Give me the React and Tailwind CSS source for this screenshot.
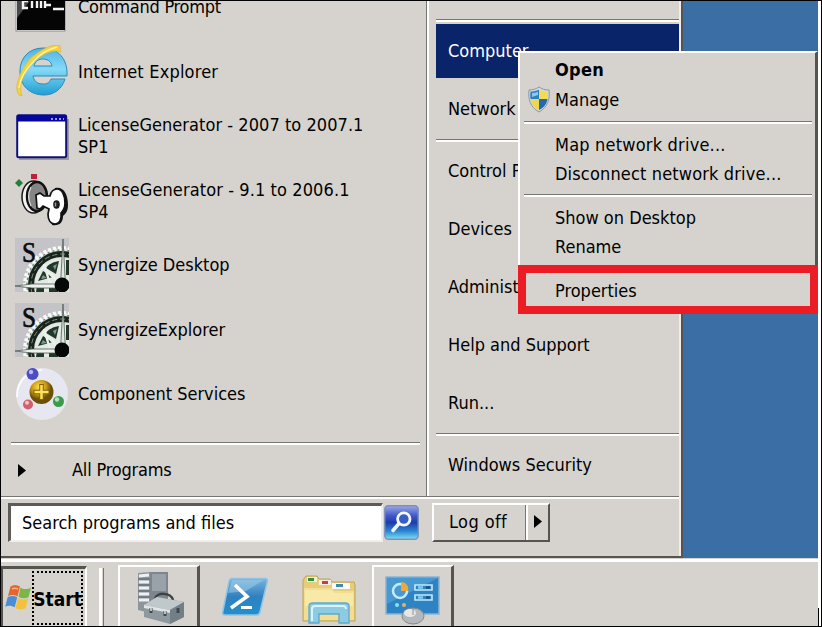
/**
 * Windows Server desktop: Start menu open, context menu shown on "Computer".
 */

/* ---------- Program icons ---------- */

function CommandPromptIcon() {
  return (
    <svg width="54" height="54" viewBox="0 0 54 54">
      <rect x="1" y="5" width="49" height="46" fill="#fff" stroke="#8d8d8d" />
      <rect x="2" y="8" width="48" height="42" fill="#050505" />
      <path d="M2 9h22L2 38z" fill="#4a4a4a" />
      <path d="M13 21H8v7h5M17 28v-8M22 20v8M26 21v7M30 20v8M30 25h6M38 29h11" stroke="#f4f4f4" strokeWidth="2.4" fill="none" />
    </svg>
  );
}

function InternetExplorerIcon() {
  return (
    <svg width="54" height="54" viewBox="0 0 54 54">
      <defs>
        <linearGradient id="ie" x1="0" y1="0" x2="0" y2="1">
          <stop offset="0" stopColor="#4fb4e2" />
          <stop offset=".45" stopColor="#84daf6" />
          <stop offset="1" stopColor="#1f9ed4" />
        </linearGradient>
      </defs>
      <path
        d="M28 3C14 3 5 13 5 26c0 15 10 24 24 24 10 0 18-6 21-16H36c-2 4-4 5-8 5-6 0-9-3-10-8h34C53 14 43 3 28 3zM19 21c1-5 5-7 9-7s8 2 9 7z"
        fill="url(#ie)"
        stroke="#2b8ab8"
        strokeWidth="1"
      />
      <path d="M4 50C-1 44 3 29 14 15 25 4 39-2 45 1l1 6C38 4 28 9 20 16 9 27 3 39 7 51z" fill="#f3d23e" stroke="#e0b53c" strokeWidth=".7" />
      <path d="M4 43c1-9 7-19 15-27C26 8 34 4 42 2" stroke="#fff3a0" strokeWidth="1.5" fill="none" />
    </svg>
  );
}

function WindowIcon() {
  return (
    <svg width="54" height="54" viewBox="0 0 54 54">
      <path d="M4 50h49V10" stroke="#9c9c9c" strokeWidth="2" fill="none" />
      <rect x="2.2" y="6.2" width="49" height="42" rx="1.5" fill="#fff" stroke="#10107c" strokeWidth="2" />
      <rect x="2" y="6" width="49" height="6.5" fill="#0505a0" />
      <path d="M36 10h2m2 0h2m2 0h2m2 0h1" stroke="#c8c8ff" strokeWidth="1.5" />
    </svg>
  );
}

function KeyIcon() {
  return (
    <svg width="54" height="54" viewBox="0 0 54 54">
      <path d="M4 5l4 4-4 4-4-4z" fill="#23803a" />
      <rect x="16" y="0" width="6" height="5" fill="#c0203a" />
      <ellipse cx="18.500" cy="23" rx="11.500" ry="16" fill="#f2f2f2" stroke="#161616" strokeWidth="1.500" />
      <ellipse cx="22" cy="22.500" rx="10" ry="14.500" fill="#858585" stroke="#111" strokeWidth="2.400" />
      <path d="M16 13c-3 6-3 13 0 19" stroke="#ddd" strokeWidth="1.2" fill="none" />
      {/* dark edge on the right of the key */}
      <path d="M40 14c9-2 13 7 13 17 0 7-3 9-5 11 0 7-4 10-11 9z" fill="#111" />
      <path
        d="M21 21l4-2 4 3h6c1-4 3-7 7-7 5 0 8 6 8 14 0 5-2 8-4 10 1 7-2 11-6 11-5 0-7-5-7-10l1-5-6-3-3 3-3-1z"
        fill="#fff"
        stroke="#111"
        strokeWidth="1.7"
      />
      <ellipse cx="41.500" cy="30.500" rx="3.300" ry="4.200" fill="#1a1a1a" />
      <path d="M40.500 28.500v4" stroke="#999" strokeWidth="1.500" />
    </svg>
  );
}

function SynergizeIcon() {
  return (
    <svg width="54" height="54" viewBox="0 0 54 54">
      <rect width="54" height="54" fill="#c4c4c8" />
      {/* quarter wheel centred on the hub */}
      <circle cx="47" cy="47" r="37" fill="#dfe4df" />
      <circle cx="47" cy="47" r="37" fill="none" stroke="#fafafa" strokeWidth="4" strokeDasharray="3 2" />
      <circle cx="47" cy="47" r="35" fill="none" stroke="#77847b" strokeWidth="1.500" strokeDasharray="2 3" />
      <circle cx="47" cy="47" r="31" fill="none" stroke="#18241c" strokeWidth="6" />
      <circle cx="47" cy="47" r="31" fill="none" stroke="#7c9383" strokeWidth="1" strokeDasharray="5 3" />
      <circle cx="47" cy="47" r="27" fill="#e3eae4" />
      <path d="M44 23c-6 1-10 3-13 7l10 6zM28 33l-5 10 15-4zM22 48l-1 6h8v-4zM34 50h9v4h-9zM51 22h3v15h-3z" fill="#22362a" />
      <path d="M28 29l17 17M29 26l6 20" stroke="#e9f1ea" strokeWidth="2.500" />
      <path d="M38 28l2 4 2-6zM28 37l-2 4 6-1z" fill="#7d9b86" />
      <path d="M48 1l2.500 46h-5z" fill="#dfe5e0" stroke="#4e5b52" strokeWidth=".8" />
      <path d="M0 48l17-2h31v4H17z" fill="#eef2ee" stroke="#4e5b52" strokeWidth=".8" />
      <circle cx="47" cy="47" r="7.500" fill="#050807" />
      <text x="7" y="24" fontSize="29" fontFamily="Liberation Serif, serif" textLength="14" lengthAdjust="spacingAndGlyphs" fill="#0b0b0b" stroke="#0b0b0b" strokeWidth=".7">
        S
      </text>
    </svg>
  );
}

function ComponentServicesIcon() {
  return (
    <svg width="54" height="54" viewBox="0 0 54 54">
      <defs>
        <radialGradient id="gold" cx=".4" cy=".3">
          <stop offset="0" stopColor="#ffe14a" />
          <stop offset=".6" stopColor="#c99a12" />
          <stop offset="1" stopColor="#6b5008" />
        </radialGradient>
      </defs>
      <circle cx="27" cy="27" r="26" fill="#e6e7f0" />
      <path d="M2 30C2 14 12 4 27 3" stroke="#fff" strokeWidth="1.500" fill="none" />
      <circle cx="17.500" cy="7" r="6" fill="#4a4ec2" />
      <circle cx="16" cy="5" r="2.200" fill="#b5b8f5" />
      <circle cx="26.500" cy="25" r="12" fill="url(#gold)" />
      <path d="M26.500 17v16M18.500 25h16" stroke="#80600c" strokeWidth="4.500" />
      <path d="M26.500 18v14M19.500 25h14" stroke="#ffe25a" strokeWidth="2.500" />
      <circle cx="13" cy="37.500" r="5" fill="#d0606c" />
      <circle cx="12" cy="35.800" r="2" fill="#f6c0c6" />
      <circle cx="43.500" cy="34.500" r="5.500" fill="#3d9a4c" />
      <circle cx="42" cy="32.500" r="2.200" fill="#b0e6b8" />
    </svg>
  );
}

/* ---------- Small icons ---------- */

function ShieldIcon() {
  return (
    <svg width="24" height="27" viewBox="0 0 24 27">
      <path d="M12 1c3 2 6 3 10 3 1 9-1 17-10 22C3 21 1 13 2 4c4 0 7-1 10-3z" fill="#d3dade" stroke="#8798a4" strokeWidth="1" />
      <path d="M12 3.500V13H3.500c-.4-3-.2-5 0-7.500 3 0 6-.500 8.500-2z" fill="#2d7fc4" />
      <path d="M12 3.500V13h8.500c.4-3 .2-5 0-7.500-3 0-6-.500-8.500-2z" fill="#f3dc50" />
      <path d="M12 24V13H3.500c.8 5 3.500 8.500 8.500 11z" fill="#f0d648" />
      <path d="M12 24V13h8.500c-.8 5-3.500 8.500-8.500 11z" fill="#2468b4" />
      <path d="M5 7c2 0 4-.5 6-1.300V9L5 11z" fill="#8cc8ee" />
    </svg>
  );
}

function SearchIcon() {
  return (
    <svg width="35" height="35" viewBox="0 0 35 35">
      <defs>
        <linearGradient id="find" x1="0" y1="0" x2="0" y2="1">
          <stop offset="0" stopColor="#9aa9ea" />
          <stop offset=".3" stopColor="#4257c8" />
          <stop offset=".5" stopColor="#1c3cae" />
          <stop offset=".75" stopColor="#2b83d0" />
          <stop offset="1" stopColor="#7be0f2" />
        </linearGradient>
      </defs>
      <rect x=".8" y=".8" width="33.400" height="33.400" rx="3.500" fill="url(#find)" stroke="#7d90b8" strokeWidth="1.400" />
      <path d="M15 18.500l-6 7" stroke="#eaf5ff" strokeWidth="3.600" strokeLinecap="round" />
      <circle cx="19.800" cy="14" r="6.200" fill="#3a5cc6" stroke="#f4faff" strokeWidth="2.800" />
    </svg>
  );
}

function WindowsFlag() {
  return (
    <svg width="27" height="27" viewBox="0 0 27 27">
      <path d="M5.500 2.500c3-2 6.500-2 9.500 0l-2.500 10c-3-2-6-2-9.500-.5z" fill="#e3662e" />
      <path d="M15.500 3.500c3 2 6.500 2 10.500 0l-2.500 9.700c-3.500 1.500-6.500 1.500-10-.5z" fill="#7db648" />
      <path d="M2.700 13c3.500-1.500 6.500-1.500 9.500.3l-2.500 10c-3-2-6-2-9.500-.6z" fill="#4a8fd6" />
      <path d="M13 14c3.500 2 7 2 10.300.3l-2.600 10c-3.300 1.500-7 1.500-10.200-.4z" fill="#f4c23a" />
      <path d="M7 5c2-1 4-1 6 0" stroke="#f6ad86" strokeWidth="1.500" fill="none" />
    </svg>
  );
}

/* ---------- Taskbar icons ---------- */

function ServerManagerIcon() {
  return (
    <svg width="50" height="54" viewBox="0 0 50 54">
      <path d="M2 2l12-1h18v36l-18 5-12-3z" fill="#8d959b" />
      <path d="M14 1h18v36l-18 5z" fill="#7d868d" />
      <path d="M16 3h14v17H16z" fill="#98a2a8" />
      <path d="M3 5l10-1M3 11h10M3 17h10M3 23h10M3 29h10" stroke="#eef1f3" strokeWidth="3" />
      <path d="M2 8h12M2 14h12M2 20h12M2 26h12" stroke="#596168" strokeWidth="1" />
      <path d="M19 28c1-7 16-7 18 1" stroke="#3c4347" strokeWidth="2.500" fill="none" />
      <path d="M8 34l13-8 27 5v15l-14 7-26-7z" fill="#8e999f" />
      <path d="M8 34l13-8 27 5-14 8z" fill="#c0c8cc" />
      <path d="M34 39l14-8v15l-14 7z" fill="#737f87" />
      <path d="M8 34l26 5v3L8 37z" fill="#dfe4e6" />
      <path d="M15 37v5M29 40v5M42 37v5" stroke="#40484e" strokeWidth="3" />
      <path d="M15 37v3M29 40v3" stroke="#fff" strokeWidth="1.300" />
    </svg>
  );
}

function PowerShellIcon() {
  return (
    <svg width="48" height="40" viewBox="0 0 48 40">
      <defs>
        <linearGradient id="ps" x1="0" y1="0" x2="0" y2="1">
          <stop offset="0" stopColor="#78b5de" />
          <stop offset=".5" stopColor="#2f80bf" />
          <stop offset="1" stopColor="#2290cf" />
        </linearGradient>
      </defs>
      <path d="M11 1.500h33q3 0 2.300 3L39 35q-.6 3-3.500 3H4q-3 0-2.300-3L8 4.500q.6-3 3-3z" fill="url(#ps)" stroke="#8fc4e4" strokeWidth="1.500" />
      <path d="M11 3h32L25 14 7 16z" fill="#a5d0ec" opacity=".5" />
      <path d="M14 8l12 11.500L10 31" stroke="#fff" strokeWidth="3.600" fill="none" />
      <path d="M20 30.500h11" stroke="#fff" strokeWidth="3" />
    </svg>
  );
}

function ExplorerIcon() {
  return (
    <svg width="56" height="50" viewBox="0 0 56 50">
      <path d="M2 5l3-4h11l2 3h11l2 3h22l1 3v36H2z" fill="#e6cd7c" stroke="#bfa355" strokeWidth="1" />
      <path d="M6 2h10v5H6z" fill="#e9f2df" />
      <path d="M7 3h6v3H7z" fill="#2e8f3c" />
      <path d="M18 5h12v5H18z" fill="#f9ece5" />
      <path d="M21 6h6v3h-6z" fill="#bf4632" />
      <path d="M31 8h18v6H31z" fill="#f8fafb" />
      <path d="M35 9h7v3h-7z" fill="#3d8bb6" />
      <path d="M3 13h28l2 3h20v29H3z" fill="#f2dd90" />
      <path d="M4 15h27l2 3h19v13H4z" fill="#f8e9a9" />
      <path d="M8 48V31q0-3 4-3h32q4 0 4 3v17H38V39H18v9z" fill="#8dcbe4" stroke="#5ca9ca" strokeWidth="1.300" />
      <path d="M11 46V34q0-3 3-3h28q3 0 3 3" stroke="#d9f4fc" strokeWidth="2" fill="none" />
    </svg>
  );
}

function ControlPanelIcon() {
  return (
    <svg width="56" height="50" viewBox="0 0 56 50">
      <rect x="1" y="1" width="53" height="37" fill="#2e83c4" stroke="#8cb5d2" strokeWidth="1.500" />
      <path d="M2 2h51L2 28z" fill="#5aa6da" opacity=".6" />
      <circle cx="15" cy="15" r="7" fill="none" stroke="#c6ebfb" strokeWidth="2.500" />
      <path d="M16 15V6c5 0 8 4 7 9z" fill="#f0a838" />
      <path d="M30 9h17v5H30zM30 19h17v5H30z" fill="#3a80b8" stroke="#bdebfa" strokeWidth="1.600" />
      <path d="M33 11.500h5M33 21.500h5" stroke="#7fd0f0" strokeWidth="2.500" />
      <path d="M41 11.500h4M41 21.500h4" stroke="#1c4f86" strokeWidth="2.500" />
      <circle cx="12" cy="29" r="2" fill="#8be1f4" />
      <circle cx="19" cy="29" r="2" fill="#eab35b" />
      <ellipse cx="28" cy="40" rx="11" ry="8" fill="#b5b8ba" stroke="#83898c" />
      <ellipse cx="25" cy="37" rx="6" ry="4" fill="#e6e8e8" />
      <path d="M28 32v7" stroke="#8b9093" />
    </svg>
  );
}

/* ---------- Data ---------- */

const programs = [
  { lines: ['Command Prompt'], Icon: CommandPromptIcon, tracking: '-tracking-[0.25px]' },
  { lines: ['Internet Explorer'], Icon: InternetExplorerIcon, tracking: 'tracking-[0.2px]' },
  { lines: ['LicenseGenerator - 2007 to 2007.1', 'SP1'], Icon: WindowIcon, tracking: 'tracking-[0.05px]' },
  { lines: ['LicenseGenerator - 9.1 to 2006.1', 'SP4'], Icon: KeyIcon, tracking: 'tracking-[0.1px]' },
  { lines: ['Synergize Desktop'], Icon: SynergizeIcon },
  { lines: ['SynergizeExplorer'], Icon: SynergizeIcon },
  { lines: ['Component Services'], Icon: ComponentServicesIcon },
];

// the context menu covers the end of some of these labels
const places = [
  ['Computer', 'Network'],
  ['Control P', 'Devices', 'Administ', 'Help and Support', 'Run...'],
  ['Windows Security'],
];

function Divider({ className = '' }) {
  return <div className={`h-[3px] shrink-0 border-t border-b-2 border-t-[#77756f] border-b-white ${className}`} />;
}

function Arrow() {
  return (
    <svg width="8" height="13" viewBox="0 0 8 13">
      <path d="M0 0l8 6.500L0 13z" fill="#000" />
    </svg>
  );
}

/* ---------- Start menu ---------- */

function ProgramList() {
  return (
    <div className="flex h-[495px] w-[426px] shrink-0 flex-col overflow-hidden border-r border-[#77756f]">
      <div className="-mt-[26px] shrink-0">
        {programs.map(({ lines, Icon, tracking = '' }) => (
          <div key={lines[0]} className="flex h-[64.5px] items-center gap-[9px] pl-[14px]">
            <Icon />
            <div className={`leading-[22px] whitespace-nowrap ${tracking}`}>
              {lines.map((line) => (
                <div key={line}>{line}</div>
              ))}
            </div>
          </div>
        ))}
      </div>
      <Divider className="mt-[15px] mr-[6px] ml-[10px]" />
      <div className="flex h-[52px] items-center pl-[17px]">
        <Arrow />
        <span className="ml-[46px] -tracking-[0.2px]">All Programs</span>
      </div>
    </div>
  );
}

function PlacesList() {
  return (
    <div className="flex h-[495px] flex-1 flex-col border-l-2 border-white pt-[18px] pl-[7px]">
      <Divider />
      {places.map((group, i) => (
        <div key={group[0]} className="shrink-0">
          {i > 0 && <Divider className="my-px" />}
          {group.map((name) => (
            <div key={name} className="flex h-[57.8px] items-center py-[2px]">
              <div
                className={`flex h-full w-full items-center pl-[12px] whitespace-nowrap ${
                  name === 'Computer' ? 'bg-[#0a246a] text-white' : ''
                }`}
              >
                {name}
              </div>
            </div>
          ))}
        </div>
      ))}
    </div>
  );
}

function StartMenu() {
  return (
    <div className="flex h-[557px] w-[682px] shrink-0 flex-col border-r-2 border-b-2 border-[#55544f] bg-[#d6d3ce]">
      <div className="flex flex-1 flex-col border-r-2 border-[#efeeec]">
        <div className="flex h-[495px]">
          <ProgramList />
          <PlacesList />
        </div>
        <Divider />
        <div className="flex items-start pt-[4px] pl-[7px]">
          <div className="flex h-[39px] w-[375px] items-center border-t-3 border-r-2 border-b-2 border-l-3 border-t-[#5c5b58] border-r-[#efeeec] border-b-[#efeeec] border-l-[#5c5b58] bg-white pl-[11px]">
            Search programs and files
          </div>
          <div className="mt-[2px] ml-px">
            <SearchIcon />
          </div>
          <div className="ml-[13px] flex h-[39px] w-[118px] border-2 border-t-white border-r-[#55544f] border-b-[#55544f] border-l-white">
            <div className="flex w-[92px] items-center border-r border-[#77756f] pb-[2px] pl-[15px] tracking-[0.4px]">Log off</div>
            <div className="flex flex-1 items-center border-l-2 border-white pb-[3px] pl-[6px]">
              <Arrow />
            </div>
          </div>
        </div>
      </div>
    </div>
  );
}

/* ---------- Context menu ---------- */

function MenuItem({ children, icon, className = '' }) {
  return (
    <div className={`flex h-[29px] shrink-0 items-center whitespace-nowrap ${className}`}>
      <div className="flex w-[35px] shrink-0 justify-center pl-[3px]">{icon}</div>
      {children}
    </div>
  );
}

function ContextMenu() {
  return (
    <div className="absolute top-[50px] left-[517px] flex h-[262px] w-[300px] flex-col border-t-2 border-r-3 border-l-2 border-t-white border-r-[#55544f] border-l-white bg-[#d6d3ce] pt-[2px]">
      <MenuItem className="font-bold tracking-[0.3px]">Open</MenuItem>
      <MenuItem className="h-[31px]" icon={<ShieldIcon />}>Manage</MenuItem>
      <Divider className="mt-[6px] mr-[3px] ml-[4px]" />
      <MenuItem className="mt-[6px] tracking-[0.2px]">Map network drive...</MenuItem>
      <MenuItem className="tracking-[0.15px]">Disconnect network drive...</MenuItem>
      <Divider className="mt-[6px] mr-[3px] ml-[4px]" />
      <MenuItem className="mt-[6px]">Show on Desktop</MenuItem>
      <MenuItem>Rename</MenuItem>
      <MenuItem className="mt-[15px]">Properties</MenuItem>
      {/* Red highlight around Properties */}
      <div className="absolute top-[212px] -left-[2px] h-[49px] w-[300px] border-8 border-[#ec1c24]" />
    </div>
  );
}

/* ---------- Taskbar ---------- */

function TaskButton({ children }) {
  return (
    <div className="flex h-[61px] w-[82px] justify-center border-t-2 border-r-3 border-l-2 border-t-white border-r-[#55544f] border-l-white">
      {children}
    </div>
  );
}

function Taskbar() {
  return (
    <div className="h-[68px] w-[817px] overflow-hidden bg-[#d6d3ce] pt-px">
      <div className="flex h-[67px] items-start border-t-3 border-white pt-[3px]">
        <div className="mt-px flex h-[61px] w-[86px] items-start border-t-3 border-r-2 border-l-2 border-t-[#55544f] border-r-white border-l-[#55544f]">
          <div className="mt-[15px] ml-[2px]">
            <WindowsFlag />
          </div>
          <div className="mt-[2px] flex h-[54px] w-[51px] items-center justify-center border-2 border-dotted border-black pt-px text-[19px] font-bold">
            Start
          </div>
        </div>
        <div className="mt-[3px] ml-[12px] h-[60px] w-[5px] border-r border-l-3 border-r-[#77756f] border-l-white" />
        <div className="ml-[14px]">
          <TaskButton>
            <div className="mt-[4px] ml-[4px]">
              <ServerManagerIcon />
            </div>
          </TaskButton>
        </div>
        <div className="mt-[12px] ml-[21px]">
          <PowerShellIcon />
        </div>
        <div className="mt-[10px] ml-[32px]">
          <ExplorerIcon />
        </div>
        <div className="ml-[15px]">
          <TaskButton>
            <div className="mt-[9px]">
              <ControlPanelIcon />
            </div>
          </TaskButton>
        </div>
      </div>
    </div>
  );
}

export default function App() {
  return (
    <div className="h-[627px] w-[822px] overflow-hidden border border-black bg-white font-['DejaVu_Sans_Condensed','DejaVu_Sans',sans-serif] text-[18px] leading-[22px] text-black">
      <div className="relative h-[625px] w-[820px]">
        <div className="flex h-[557px] w-[817px] bg-[#3a6ea5]">
          <StartMenu />
        </div>
        <div className="flex items-end">
          <Taskbar />
          <div className="h-[18px] w-px bg-black" />
        </div>
        <ContextMenu />
      </div>
    </div>
  );
}
